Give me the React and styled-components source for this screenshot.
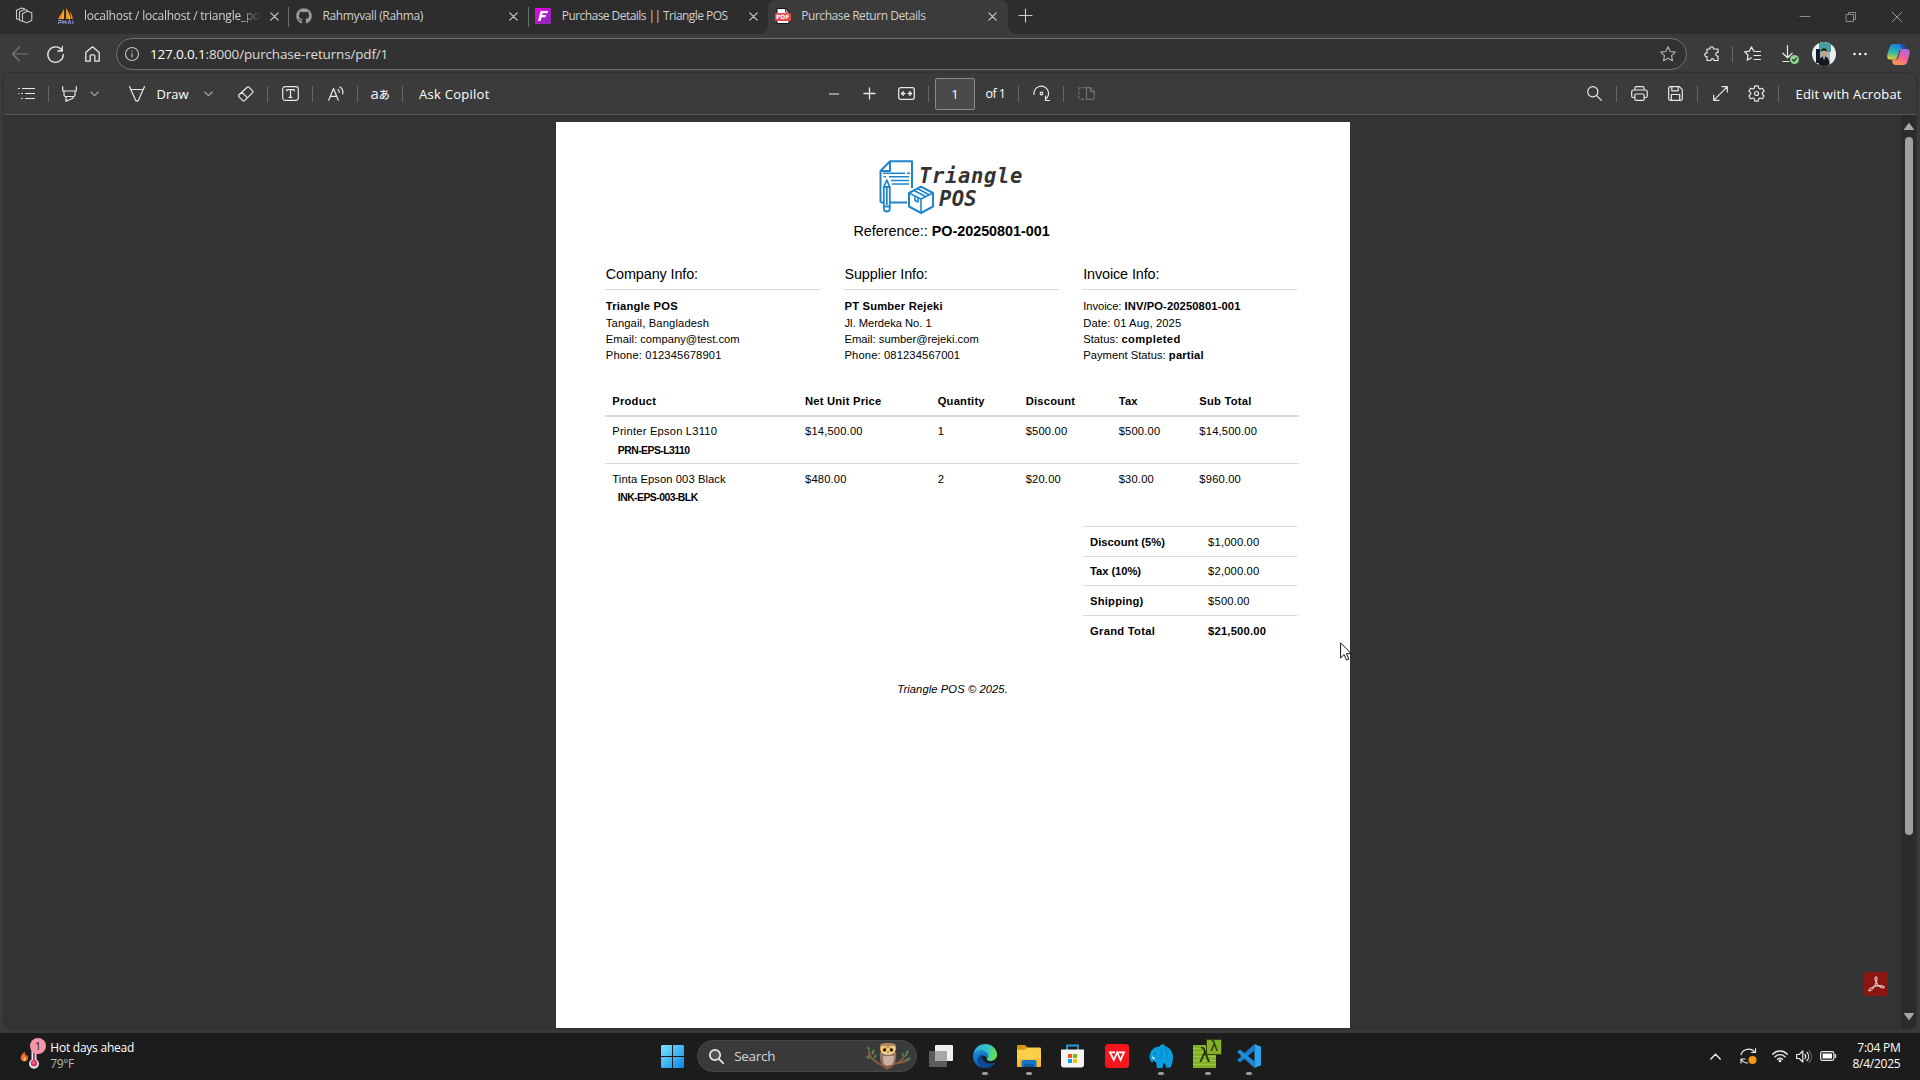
import React from 'react';
import styled, { createGlobalStyle, css } from 'styled-components';
import { FaGithub } from 'react-icons/fa';

const ui = '"Open Sans", "Noto Sans", sans-serif';
const doc = '"Liberation Sans", Arial, sans-serif';

const Global = createGlobalStyle`
  * { box-sizing: border-box; }
  body { margin: 0; background: #3b3b3b; overflow: hidden; }
  svg { display: block; flex: none; overflow: visible; }
`;

const Desktop = styled.div`
  display: flex;
  flex-direction: column;
  width: 1920px;
  height: 1080px;
  background: #3b3b3b;
  font-family: ${ui};
  color: #fff;
`;

/* ---------- shared bits ---------- */

const Icon = styled.svg.attrs((p) => ({
  width: p.$w || 16,
  height: p.$h || 16,
  viewBox: p.$box || `0 0 ${p.$w || 16} ${p.$h || 16}`,
}))`
  fill: none;
  stroke: ${(p) => p.$color || '#e8e8e8'};
  stroke-width: ${(p) => p.$line || 1.1};
  stroke-linecap: round;
  stroke-linejoin: round;
  margin-left: ${(p) => p.$gap || 0}px;
`;

const Divider = styled.span`
  flex: none;
  width: 1px;
  height: ${(p) => p.$h || 16}px;
  margin-left: ${(p) => p.$gap || 0}px;
  background: #666;
`;

const Label = styled.span`
  flex: none;
  width: ${(p) => (p.$w ? `${p.$w}px` : 'auto')};
  margin-left: ${(p) => p.$gap || 0}px;
  font-size: ${(p) => p.$size || 13}px;
  line-height: 18px;
  letter-spacing: ${(p) => p.$ls || 0}px;
  white-space: nowrap;
  color: ${(p) => p.$color || '#fff'};
`;

/* ---------- tab strip ---------- */

const TabStrip = styled.header`
  display: flex;
  flex: none;
  height: 34px;
  background: #2d2d2d;
`;

const Workspaces = styled.div`
  display: flex;
  width: 50px;
  padding: 7px 0 0 15px;
`;

const TabBox = styled.div`
  position: relative;
  display: flex;
  align-items: center;
  flex: none;
  width: 239.4px;
  height: 34px;
  padding: 0 10.500px 2px 6.500px;
  ${(p) => p.$active && css`
    background: #3b3b3b;
    border-radius: 8px 8px 0 0;
    &::before, &::after {
      content: '';
      position: absolute;
      bottom: 0;
      width: 8px;
      height: 8px;
    }
    &::before { left: -8px; background: radial-gradient(circle at 0 0, transparent 7.5px, #3b3b3b 8px); }
    &::after { right: -8px; background: radial-gradient(circle at 100% 0, transparent 7.5px, #3b3b3b 8px); }
  `}
`;

const TabTitle = styled.span`
  width: 178px;
  margin-left: 10.5px;
  overflow: hidden;
  font-size: 12px;
  line-height: 18px;
  letter-spacing: ${(p) => p.$ls}px;
  color: #cfcfcf;
  white-space: nowrap;
  ${(p) => p.$fade && css`mask-image: linear-gradient(90deg, #000 87%, transparent 100%);`}
`;

const TabClose = styled.span`
  display: flex;
  flex: 1;
  justify-content: flex-end;
`;

const TabEdge = styled.span`
  position: absolute;
  right: 0;
  top: 7px;
  width: 1px;
  height: 20px;
  background: #6e6e6e;
`;

const GithubMark = styled(FaGithub)`
  width: 16px;
  height: 16px;
  color: #9a9a9a;
`;

const NewTab = styled.div`
  display: flex;
  padding: 9px 0 0 11px;
`;

const WindowControls = styled.div`
  display: flex;
  align-items: center;
  margin-left: auto;
  padding-right: 18px;
`;

function Tab({ icon, title, ls, active, edge, fade }) {
  return (
    <TabBox $active={active}>
      {icon}
      <TabTitle $ls={ls} $fade={fade}>{title}</TabTitle>
      <TabClose>
        <Icon $w={9} $h={9} $color="#d0d0d0"><path d="M.8 .8l7.4 7.4M8.2 .8L.8 8.2" /></Icon>
      </TabClose>
      {edge && <TabEdge />}
    </TabBox>
  );
}

const PmaIcon = () => (
  <svg width="17" height="17" viewBox="0 0 17 17">
    <path d="M7 1L1 11h5.5zM9 0v11h4.5C13 7 11.500 3 9 0zM13 3c1.500 2.500 2.500 5 2.800 8h-1.600z" fill="#f29111" />
    <path d="M7 1L5 11h1.500zM11 4l1 7h1.500z" fill="#ffc266" />
    <path d="M1 12.500h3v2H1.500V16M6 16v-3l1.500 1.500L9 13v3M11 16l1.500-3.500L14 16M15.800 12.500V16" stroke="#8a8ecb" strokeWidth="1.100" fill="none" />
  </svg>
);

const FlexIcon = () => (
  <svg width="16" height="16" viewBox="0 0 16 16">
    <defs>
      <linearGradient id="fl" x1="0" y1="0" x2="1" y2="1">
        <stop offset="0" stopColor="#f400f4" /><stop offset="1" stopColor="#7b2fa8" />
      </linearGradient>
    </defs>
    <rect width="16" height="16" rx="1" fill="url(#fl)" />
    <path d="M5.500 3H13l-.6 2.300H7.600L7.200 7H11l-.6 2.200H6.600L5.600 13H3z" fill="#fff" />
  </svg>
);

const PdfBadge = styled.span`
  position: relative;
  display: flex;
  align-items: center;
  justify-content: center;
  flex: none;
  width: 16px;
  height: 16px;
`;

const PdfSheet = styled.svg`
  position: absolute;
  inset: 0;
`;

const PdfWord = styled.span`
  position: relative;
  width: 16px;
  height: 8px;
  margin-top: 2px;
  border-radius: 1px;
  background: #e5484d;
  color: #fff;
  font: bold 6px/8px "DejaVu Sans", sans-serif;
  text-align: center;
`;

const PdfIcon = () => (
  <PdfBadge>
    <PdfSheet width="16" height="16" viewBox="0 0 16 16">
      <path d="M2 .5h8.500L14 4v11.500H2z" fill="#fff" stroke="#111" />
      <path d="M10.500 .5V4H14z" fill="#ddd" stroke="#111" strokeWidth=".8" />
    </PdfSheet>
    <PdfWord>PDF</PdfWord>
  </PdfBadge>
);

/* ---------- address bar ---------- */

const NavBar = styled.nav`
  display: flex;
  align-items: center;
  flex: none;
  height: 39px;
  padding-top: 1px;
`;

const AddressBox = styled.div`
  display: flex;
  align-items: center;
  flex: none;
  width: 1571px;
  height: 32px;
  margin-left: 16px;
  padding: 0 10px 0 8px;
  border: 1px solid #707070;
  border-radius: 16px;
  background: #323232;
`;

const Url = styled.span`
  flex: 1;
  margin-left: 11px;
  font-size: 13.5px;
  line-height: 18px;
  letter-spacing: -0.16px;
  color: #dcdcdc;
`;

const Host = styled.span`
  color: #fff;
`;

const Avatar = () => (
  <svg width="24" height="24" viewBox="0 0 24 24">
    <defs><clipPath id="av"><circle cx="12" cy="12" r="12" /></clipPath></defs>
    <g clipPath="url(#av)">
      <rect width="24" height="24" fill="#e9eef0" />
      <rect x="7" width="12" height="10" fill="#4a9d9e" />
      <rect x="8" y="10" width="10" height="14" fill="#9fb5b6" />
      <rect x="4" y="7" width="4" height="14" fill="#111c2c" />
      <path d="M6.500 24c0-7 2-9.500 5.500-9.500s5.500 2.500 5.500 9.500z" fill="#15161c" />
      <ellipse cx="12" cy="10.500" rx="2.800" ry="3.600" fill="#c99f86" />
      <path d="M9 10c-.3-5 6.300-5 6 0-.6-2-5-2-6 0z" fill="#15130f" />
      <path d="M11 14.500h2l-1 4z" fill="#ddd" />
    </g>
  </svg>
);

const Spaced = styled.span`
  display: flex;
  flex: none;
  margin-left: ${(p) => p.$gap || 0}px;
`;

const Copilot = () => (
  <svg width="23" height="21" viewBox="0 0 23 21">
    <defs>
      <linearGradient id="c1" x1=".3" y1="0" x2=".1" y2="1">
        <stop offset="0" stopColor="#1c7fe0" /><stop offset=".5" stopColor="#2fb6a5" /><stop offset="1" stopColor="#f3d22b" />
      </linearGradient>
      <linearGradient id="c2" x1=".8" y1="0" x2=".3" y2="1">
        <stop offset="0" stopColor="#a76be8" /><stop offset=".5" stopColor="#ee5f9a" /><stop offset="1" stopColor="#ff9a4a" />
      </linearGradient>
    </defs>
    <path d="M6.500 0h8c1.800 0 2.500 1 3 2.500L18.200 5h-3c-1.600 0-2.400.8-2.900 2.300L10.500 13c-.6 1.800-1.600 2.600-3 2.600H3.400C.6 15.600-.3 13.500.4 10.500L2.500 3.400C3.200 1.200 4.500 0 6.500 0z" fill="url(#c1)" />
    <path d="M13 0h1.500c1.800 0 2.500 1 3 2.500L18.200 5h-3.700z" fill="#1a4fc4" />
    <path d="M16.500 21h-8c-1.800 0-2.500-1-3-2.500l-.7-2.900h3c1.600 0 2.400-.6 2.900-2.200l1.800-5.800C13 5.800 14 5 15.500 5h4.100c2.800 0 3.700 2.200 3 5.200l-2.100 7.300c-.7 2.300-2 3.500-4 3.500z" fill="url(#c2)" />
    <path d="M10.200 14l2.200-6.800c.3-.9.700-1.500 1.300-1.800l-2.500 8.300c-.4 1.200-1 1.900-2.300 1.900.7-.3 1-.8 1.300-1.600z" fill="#3a3a3a" />
  </svg>
);

/* ---------- viewer ---------- */

const Viewer = styled.main`
  display: flex;
  flex-direction: column;
  flex: none;
  height: 956px;
  margin: 0 4px;
  border-radius: 8px;
  overflow: hidden;
  box-shadow: 0 0 3px rgba(0, 0, 0, 0.35);
`;

const PdfBar = styled.div`
  display: flex;
  align-items: center;
  flex: none;
  height: 42px;
  background: #3b3b3b;
  border-bottom: 1px solid #565656;
`;

const PageInput = styled.span`
  flex: none;
  width: 40px;
  height: 32px;
  margin-left: 6px;
  border: 1px solid #8a8a8a;
  border-radius: 2px;
  background: #4a4a4a;
  font-size: 13px;
  line-height: 31px;
  text-align: center;
`;

const Glyph = styled.span`
  display: flex;
  align-items: baseline;
  flex: none;
  width: ${(p) => p.$w}px;
  margin-left: ${(p) => p.$gap}px;
  font: 15px/16px "Open Sans", sans-serif;
  color: #f0f0f0;
  white-space: nowrap;
`;

const SmallKana = styled.span`
  font: 500 11px/16px "Noto Sans CJK JP", sans-serif;
`;

const Canvas = styled.div`
  position: relative;
  display: flex;
  flex: 1;
  min-height: 0;
  background: #333;
`;

const PageArea = styled.div`
  flex: 1;
  padding: 7px 0 1px 552px;
`;

const ScrollTrack = styled.div`
  display: flex;
  flex-direction: column;
  align-items: center;
  flex: none;
  width: 15px;
  padding: 8px 0 9px;
  background: #2b2b2b;
`;

const ScrollThumb = styled.div`
  width: 8px;
  height: 698px;
  margin: 7px 0 auto;
  border-radius: 4px;
  background: #9f9f9f;
`;

const AcrobatFab = styled.div`
  position: absolute;
  right: 28px;
  bottom: 33px;
  display: flex;
  align-items: center;
  justify-content: center;
  width: 24px;
  height: 24px;
  border-radius: 3px;
  background: #8c1512;
`;

const Pointer = styled.svg`
  position: absolute;
  left: 1336px;
  top: 527px;
`;

/* ---------- invoice sheet ---------- */

const Sheet = styled.article`
  display: flex;
  flex-direction: column;
  width: 794px;
  height: 906px;
  padding: 38px 51px 0 49px;
  background: #fff;
  color: #000;
  font-family: ${doc};
  font-size: 11.2px;
  line-height: 16px;
  letter-spacing: 0.17px;
  white-space: nowrap;
`;

const Brand = styled.div`
  display: flex;
  height: 54px;
  padding-left: 274px;
`;

const BrandName = styled.div`
  display: flex;
  flex-direction: column;
  margin-left: -15px;
  padding-top: 5px;
  font: italic bold 20.5px/23px "DejaVu Sans Mono", monospace;
  letter-spacing: 0.65px;
  color: #333;
`;

const BrandSecond = styled.span`
  padding-left: 20px;
  letter-spacing: 0.3px;
`;

const Reference = styled.div`
  margin: 7px 0 0 248.500px;
  font-size: 14.4px;
  line-height: 20px;
  letter-spacing: -0.02px;
`;

const InfoGrid = styled.section`
  display: grid;
  grid-template-columns: 215px 215px 215px;
  column-gap: 23.7px;
  margin-top: 23px;
`;

const InfoTitle = styled.h4`
  margin: 0 0 8px;
  padding: 0 0 5px 0.8px;
  border-bottom: 1px solid #d9d9d9;
  font-size: 14.4px;
  font-weight: 400;
  line-height: 20px;
  letter-spacing: -0.11px;
`;

const Line = styled.div`
  height: ${(p) => (p.$first ? 17 : 16)}px;
  padding-left: 0.8px;
  letter-spacing: ${(p) => p.$ls ?? 0.13}px;
`;

const Strong = styled.b`
  letter-spacing: ${(p) => p.$ls ?? 0.2}px;
`;

const ItemRow = styled.div`
  display: grid;
  grid-template-columns: 192.7px 132.7px 88px 93px 80.7px 1fr;
  padding: ${(p) => p.$top}px 0 ${(p) => p.$bottom}px 7.3px;
  ${(p) => p.$rule && css`border-bottom: ${p.$rule}px solid #d9d9d9;`}
`;

const HeadRow = styled(ItemRow)`
  margin-top: 24px;
  font-weight: 700;
  letter-spacing: 0.22px;
`;

const Name = styled.div`
  letter-spacing: ${(p) => p.$ls}px;
`;

const Sku = styled.div`
  margin-top: ${(p) => p.$top}px;
  margin-bottom: -1px;
  padding-left: 5.500px;
  font-size: 10.4px;
  font-weight: 700;
  letter-spacing: -0.53px;
`;

const Totals = styled.section`
  width: 214px;
  margin: 21px 0 0 478px;
`;

const TotalRow = styled.div`
  display: grid;
  grid-template-columns: 118px 1fr;
  height: ${(p) => p.$h}px;
  padding: ${(p) => p.$h - 23}px 0 0 7.100px;
  border-top: 1px solid #d9d9d9;
`;

const Footer = styled.footer`
  margin: 36px 0 0 292.300px;
  font-style: italic;
  letter-spacing: 0.09px;
`;

const BrandIcon = () => (
  <svg width="55" height="55" viewBox="0 0 55 55" fill="none" stroke="#1f86cc" strokeWidth="2" strokeLinejoin="round">
    <path d="M1.500 42.500V11L11 1.200h22V28M11 1.200V11H1.500M1.500 42.500H5M11 42.500h17" />
    <path d="M4 13.200h22M4.500 16.800H7M10 16.800h20M12 20.500h18M13 24h17" strokeWidth="1.400" />
    <path d="M28 13.200h3" strokeWidth="1.400" />
    <path d="M4.800 27v21.500a3 3 0 0 0 6 0V27L7.800 20zM4.800 27h6M4.800 46.500h6M7.800 28v17" fill="#fff" strokeWidth="1.800" />
    <path d="M30 33l12-6.300L54 33v13.500L42 53l-12-6.500z" fill="#fff" />
    <path d="M30 33l12 6 12-6M42 39v14M35 30.500L46.500 36.500M38.500 28.500L50.500 35M36 36v4.500l3 1.500v-4.500" strokeWidth="1.600" />
  </svg>
);

/* ---------- taskbar ---------- */

const Taskbar = styled.footer`
  position: relative;
  display: flex;
  align-items: center;
  flex: none;
  height: 47px;
  margin-top: 4px;
  padding-bottom: 1px;
  background: #1c1c1c;
`;

const Weather = styled.div`
  display: flex;
  align-items: center;
  width: 661px;
  padding-left: 20px;
`;

const TwoLines = styled.div`
  display: flex;
  flex-direction: column;
  align-items: ${(p) => p.$align || 'flex-start'};
  margin-left: ${(p) => p.$gap || 0}px;
  font-size: 12px;
  line-height: 16px;
  letter-spacing: -0.24px;
`;

const Muted = styled.span`
  color: #b9b9b9;
  letter-spacing: -0.4px;
`;

const Badge = styled.span`
  position: absolute;
  left: 30px;
  top: 5px;
  width: 16px;
  height: 16px;
  border-radius: 50%;
  background: #f797a3;
  color: #222;
  font-size: 11px;
  line-height: 16px;
  text-align: center;
`;

const SearchPill = styled.div`
  display: flex;
  align-items: center;
  flex: none;
  width: 220px;
  height: 32px;
  margin-left: 13px;
  padding: 0 5px 0 11px;
  border: 1px solid #474747;
  border-radius: 16px;
  background: #3a3a3a;
`;

const SearchText = styled.span`
  flex: 1;
  margin-left: 10.2px;
  font-size: 13.5px;
  line-height: 18px;
  letter-spacing: -0.3px;
  color: #d6d6d6;
`;

const TaskApp = styled.div`
  position: relative;
  flex: none;
  margin-left: ${(p) => p.$gap}px;
  ${(p) => p.$open && css`
    &::after {
      content: '';
      position: absolute;
      left: calc(50% - 3px);
      top: calc(50% + 15.500px);
      width: 6px;
      height: 3px;
      border-radius: 2px;
      background: #9a9a9a;
    }
  `}
`;

const Lambda = styled.div`
  display: flex;
  align-items: center;
  justify-content: center;
  width: ${(p) => p.$s}px;
  height: ${(p) => p.$s}px;
  background: ${(p) => (p.$lined ? 'repeating-linear-gradient(#84b026 0 3px, #a0c94a 3px 4px)' : '#84b026')};
  color: #222c10;
  font: ${(p) => p.$s * 0.85}px/1 "DejaVu Sans", sans-serif;
`;

const LambdaStack = styled.div`
  width: 29px;
  height: 23px;
`;

const LambdaTop = styled(Lambda)`
  position: absolute;
  right: 0;
  top: -6px;
  border: 1px solid #35420f;
`;

const Tray = styled.div`
  display: flex;
  align-items: center;
  margin-left: auto;
  padding-right: 19.500px;
`;

const Thermo = () => (
  <svg width="20" height="24" viewBox="0 0 20 24">
    <path d="M4.500 8c-2.500 2-4 4-3.800 6 .1 2 1.600 3.500 3.600 3.500S8 16 8 14c0-1.500-.8-2.500-1.500-3.200-.3.800-.8 1-1.200 1C5.500 10.500 5.300 9 4.500 8z" fill="#ee6c35" />
    <path d="M4.500 13c-1.300 1-1.500 3.500 0 4 1.500-.5 1.500-2.500 0-4z" fill="#ffc45c" />
    <path d="M11.500 1v14.500a5 5 0 1 0 5 0V1z" fill="#dfe5fa" />
    <circle cx="14" cy="19.300" r="3.200" fill="#d33b5c" /><rect x="13" y="4" width="2" height="14" fill="#d33b5c" />
    <circle cx="13.500" cy="18.800" r="1" fill="#ff9fb5" />
  </svg>
);

const WinLogo = () => (
  <svg width="23" height="23" viewBox="0 0 23 23">
    <defs><linearGradient id="w" x1="0" y1="0" x2="1" y2="1"><stop offset="0" stopColor="#7fe6fd" /><stop offset="1" stopColor="#0a86e8" /></linearGradient></defs>
    <path d="M1 0h10v11H0V1zM12 0h10l1 1v10H12zM0 12h11v11H1l-1-1zM12 12h11v10l-1 1H12z" fill="url(#w)" />
  </svg>
);

const Owl = () => (
  <svg width="45" height="27" viewBox="0 0 45 27">
    <path d="M3 9c1 6 5 10 13 13 10 2 18-2 24-10M31 20c4 0 8-1 11-4M16 22l4 3M5 14L2 13" stroke="#8a5a3f" strokeWidth="2" fill="none" strokeLinecap="round" />
    <path d="M2 3c2 1 2 4 1 5-1-1-2-3-1-5zM8 6c1 2 0 5-2 6-1-2 0-5 2-6zM10 11c1 2 0 4-2 5 0-2 0-4 2-5zM0 13c2 0 3 1 4 3-2 0-4-1-4-3zM42 7c1 2 0 4-2 6-1-2 0-5 2-6zM37 9c1 2 1 4 0 5-1-1-1-4 0-5zM45 15c-1 2-3 3-5 3 0-2 3-4 5-3z" fill="#4f8f57" />
    <path d="M14 9c-1 9 2 15 8 15s9-6 8-15z" fill="#9a7463" />
    <path d="M17 13c0 6 1 10 5 10s6-4 6-10z" fill="#cbb0a0" />
    <path d="M14.500 1.500C17-.5 27-.5 29.500 1.500c1.500 4 .8 10-7.500 10.500-8.300-.5-9-6.500-7.500-10.500z" fill="#b58a5c" />
    <path d="M15 4c3-2 6-1 7 2 1-3 4-4 7-2 1 4-1 7.500-7 7.500S14 8 15 4z" fill="#f3dfae" />
    <circle cx="18.600" cy="6.800" r="2.700" fill="#f2b32c" /><circle cx="25.400" cy="6.800" r="2.700" fill="#f2b32c" />
    <circle cx="18.600" cy="6.800" r="1.600" fill="#1b1410" /><circle cx="25.400" cy="6.800" r="1.600" fill="#1b1410" />
    <path d="M21 8.500h2l-1 2.500z" fill="#6a4526" />
    <path d="M17 22l3 1 5-1 2 2-7 3z" fill="#8a5a3f" />
  </svg>
);

const TaskView = () => (
  <svg width="24" height="22" viewBox="0 0 24 22">
    <rect y="6" width="18" height="16" rx="1" fill="#5c5c5c" />
    <rect x="6" width="18" height="16" rx="1" fill="#efefef" />
    <path d="M6 6h12v10H7l-1-1z" fill="#a8a8a8" />
  </svg>
);

const Edge = () => (
  <svg width="24" height="24" viewBox="0 0 24 24">
    <defs>
      <linearGradient id="e1" x1="0" y1=".3" x2="1" y2=".5"><stop offset="0" stopColor="#2aa9e6" /><stop offset=".6" stopColor="#36c6c0" /><stop offset="1" stopColor="#6be04a" /></linearGradient>
      <linearGradient id="e2" x1="0" y1="0" x2=".4" y2="1"><stop offset="0" stopColor="#1b8fe0" /><stop offset="1" stopColor="#0c59a8" /></linearGradient>
    </defs>
    <path d="M.2 11C1 4.500 5.800 0 12 0c7 0 12 5 12 10.500 0 4-3 6.500-6.500 6.500-3 0-4-1.300-3.700-2.200.7-1 1-1.800 1-3 0-3-3-5-6.500-5C4.500 6.800 1.500 8.500.2 11z" fill="url(#e1)" />
    <path d="M.1 11.500C1 8.800 4 6.500 8 6.500c3.500 0 6.800 2 6.800 5.200 0 1-.3 2-.8 2.800-.6-1.600-1.900-3-4-3-3.500 0-3.500 9 4.500 10 3 .4 5.500-1 7.300-2.700C19.600 22 16 24 12 24 5 24-.5 18.500.1 11.500z" fill="url(#e2)" />
    <path d="M9 10.200c-3 1.200-5 4-4.600 7 .4 3.500 3.600 6.500 7.600 6.800 4 0 7.200-1.600 9.400-4.600.4-.6 0-1-.6-.7-1.400.7-3 1-4.800.9C11.500 19 8.500 16 9 10.200z" fill="#0a4a94" />
  </svg>
);

const Explorer = () => (
  <svg width="24" height="22" viewBox="0 0 24 22">
    <path d="M0 1.500C0 .7.500 0 1.500 0H8l2.500 2.500L9 5H0z" fill="#d9960f" />
    <path d="M0 4.800h7.500L10 2.500h12.500c.9 0 1.500.6 1.500 1.500v16.500c0 .9-.6 1.500-1.500 1.500h-21C.6 22 0 21.400 0 20.500z" fill="#fbcf49" />
    <path d="M0 14h24v6.500c0 .9-.6 1.500-1.500 1.500h-21C.6 22 0 21.400 0 20.500z" fill="#f5bb35" />
    <path d="M4.500 22v-5c0-1.200.8-2 2-2h11c1.200 0 2 .8 2 2v5z" fill="#1873c4" />
    <path d="M7 19h10v3H7z" fill="#0f5aa3" />
  </svg>
);

const Store = () => (
  <svg width="23" height="24" viewBox="0 0 23 24">
    <path d="M6 6V1.500h11V6" fill="none" stroke="#2c95dc" strokeWidth="1.800" />
    <path d="M0 5.500h23V21c0 1.600-1 2.500-2.500 2.500h-18C1 23.500 0 22.600 0 21z" fill="#f3f3f3" />
    <path d="M7 10h4v4H7z" fill="#f25022" /><path d="M12 10h4v4h-4z" fill="#7fba00" />
    <path d="M7 15h4v4H7z" fill="#00a4ef" /><path d="M12 15h4v4h-4z" fill="#ffb900" />
  </svg>
);

const Wps = () => (
  <svg width="24" height="24" viewBox="0 0 24 24">
    <rect width="24" height="24" rx="3.500" fill="#f9141e" />
    <path d="M3.800 8.300H10M5 8.500l3.800 7.500 3.400-7.500 3.300 7.500L19 8.300h-5.500" fill="none" stroke="#fff" strokeWidth="1.800" />
  </svg>
);

const Elephant = () => (
  <svg width="24" height="24" viewBox="0 0 24 24">
    <path d="M1 10C2.500 5 6 2.800 10.500 2.500 12 .8 13.500 0 15 .5l.8 1.500C21 3.500 24 8 24 13c0 4-1 7.500-2.500 10.500H17l-.8-4h-2L13.500 24H8l-1-6c-1.500 0-2.500-.8-3-2l-.5 3C.5 16.500 0 13 1 10z" fill="#0c9fe0" />
    <path d="M11 4c3 3 2 9-2 11M14.500 3c4 3 4 8 3 12" stroke="#0b7fc0" strokeWidth="1" fill="none" />
    <path d="M3 12l3.300 3-2.500.3z" fill="#fff" /><circle cx="6" cy="9.500" r=".7" fill="#063c66" />
  </svg>
);

const VsCode = () => (
  <svg width="24" height="24" viewBox="0 0 24 24">
    <path d="M17.500 0L24 2.800v18.400L17.500 24z" fill="#2ea3f0" />
    <path d="M17.500 0v6.500L3 18.500 0 16z" fill="#1680cf" />
    <path d="M17.500 24v-6.500L3 5.500 0 8z" fill="#1c8ddb" />
  </svg>
);

/* ---------- data ---------- */

const items = [
  { name: 'Printer Epson L3110', ls: 0.19, sku: 'PRN-EPS-L3110', price: '$14,500.00', qty: '1', discount: '$500.00', tax: '$500.00', sub: '$14,500.00', top: 6, bottom: 5, skuTop: 4, rule: 1 },
  { name: 'Tinta Epson 003 Black', ls: 0.09, sku: 'INK-EPS-003-BLK', price: '$480.00', qty: '2', discount: '$20.00', tax: '$30.00', sub: '$960.00', top: 7, bottom: 0, skuTop: 3 },
];

const Invoice = () => (
  <Sheet>
    <Brand>
      <BrandIcon />
      <BrandName><span>Triangle</span><BrandSecond>POS</BrandSecond></BrandName>
    </Brand>
    <Reference>Reference:: <b>PO-20250801-001</b></Reference>
    <InfoGrid>
      <div>
        <InfoTitle>Company Info:</InfoTitle>
        <Line $first><Strong>Triangle POS</Strong></Line>
        <Line $ls={0.14}>Tangail, Bangladesh</Line>
        <Line $ls={0.03}>Email: company@test.com</Line>
        <Line>Phone: 012345678901</Line>
      </div>
      <div>
        <InfoTitle>Supplier Info:</InfoTitle>
        <Line $first><Strong>PT Sumber Rejeki</Strong></Line>
        <Line $ls={-0.03}>Jl. Merdeka No. 1</Line>
        <Line $ls={0.02}>Email: sumber@rejeki.com</Line>
        <Line>Phone: 081234567001</Line>
      </div>
      <div>
        <InfoTitle>Invoice Info:</InfoTitle>
        <Line $first $ls={-0.04}>Invoice: <Strong $ls={0.115}>INV/PO-20250801-001</Strong></Line>
        <Line>Date: 01 Aug, 2025</Line>
        <Line $ls={0.04}>Status: <Strong $ls={0.36}>completed</Strong></Line>
        <Line $ls={0.03}>Payment Status: <Strong>partial</Strong></Line>
      </div>
    </InfoGrid>
    <HeadRow $top={6} $bottom={6} $rule={2}>
      <span>Product</span><span>Net Unit Price</span><span>Quantity</span>
      <span>Discount</span><span>Tax</span><span>Sub Total</span>
    </HeadRow>
    {items.map((r) => (
      <ItemRow key={r.sku} $top={r.top} $bottom={r.bottom} $rule={r.rule}>
        <Name $ls={r.ls}>{r.name}<Sku $top={r.skuTop}>{r.sku}</Sku></Name>
        <span>{r.price}</span><span>{r.qty}</span><span>{r.discount}</span><span>{r.tax}</span><span>{r.sub}</span>
      </ItemRow>
    ))}
    <Totals>
      <TotalRow $h={30}><Strong $ls={0.03}>Discount (5%)</Strong><span>$1,000.00</span></TotalRow>
      <TotalRow $h={29}><Strong $ls={-0.06}>Tax (10%)</Strong><span>$2,000.00</span></TotalRow>
      <TotalRow $h={30}><Strong>Shipping)</Strong><span>$500.00</span></TotalRow>
      <TotalRow $h={30}><Strong $ls={0.27}>Grand Total</Strong><Strong>$21,500.00</Strong></TotalRow>
    </Totals>
    <Footer>Triangle POS © 2025.</Footer>
  </Sheet>
);

export default function App() {
  return (
    <Desktop>
      <Global />
      <TabStrip>
        <Workspaces>
          <Icon $w={18} $h={18} $color="#c8c8c8">
            <path d="M7.500 6.500l4.800-2.300 4.500 1.600v7.400L12 15.800l-4.500-1.600zM4.500 13V4.800L9.500 2.500l3 .9M1.500 11.500V3.300L6.500 1l3 .9M1.500 11.500l1.800 1.200M4.500 13l1.800 1.200" />
          </Icon>
        </Workspaces>
        <Tab icon={<PmaIcon />} title="localhost / localhost / triangle_po" ls={-0.23} edge fade />
        <Tab icon={<GithubMark />} title="Rahmyvall (Rahma)" ls={-0.36} edge />
        <Tab icon={<FlexIcon />} title="Purchase Details || Triangle POS" ls={-0.557} />
        <Tab icon={<PdfIcon />} title="Purchase Return Details" ls={-0.43} active />
        <NewTab><Icon $w={13} $h={13} $color="#d0d0d0"><path d="M6.500 0v13M0 6.500h13" /></Icon></NewTab>
        <WindowControls>
          <Icon $w={10} $h={10} $color="#8c8c8c" $line={1}><path d="M0 4.500h10" /></Icon>
          <Icon $w={10} $h={10} $gap={36} $color="#8c8c8c" $line={1}><path d="M.5 2.500h7v7h-7zM2.500 2.500v-2h7v7h-2" /></Icon>
          <Icon $w={10} $h={10} $gap={36} $color="#9a9a9a" $line={1}><path d="M0 0l10 10M10 0L0 10" /></Icon>
        </WindowControls>
      </TabStrip>

      <NavBar>
        <Icon $gap={12} $color="#7a7a7a"><path d="M.5 8h15M7.500 1L.5 8l7 7" /></Icon>
        <Icon $w={17} $h={17} $gap={19} $line={1.3}><path d="M15 4.500A7.700 7.700 0 1 0 16.200 8.500M15.300 .5v4.500h-4.500" /></Icon>
        <Icon $w={15} $h={16} $gap={21} $line={1.3}><path d="M.8 6.500L7.500 .8l6.700 5.700v8.700H9.800V9.800a1 1 0 0 0-1-1H6.200a1 1 0 0 0-1 1v5.400H.8z" /></Icon>
        <AddressBox>
          <Icon $w={14} $h={14} $color="#c4c4c4"><circle cx="7" cy="7" r="6.500" /><path d="M7 6.500V10M7 4v.3" /></Icon>
          <Url><Host>127.0.0.1</Host>:8000/purchase-returns/pdf/1</Url>
          <Icon $color="#b0b0b0"><path d="M8 .8l2.200 4.700 5.100.6-3.800 3.500 1 5.100L8 12.200l-4.500 2.500 1-5.100L.7 6.100l5.100-.6z" /></Icon>
        </AddressBox>
        <Icon $gap={16.5} $line={1.2}><path d="M3 3h3c-.6-3 4-3 3.500 0H14v3.500c-3-.5-3 4 0 3.500V14.500h-4c.4-2.500-3.500-2.500-3 0H3v-4c-3 .5-3-4 0-3.500z" /></Icon>
        <Divider $gap={12} />
        <Icon $w={17} $gap={11.5} $line={1.2}><path d="M10.500 5.200L9.600 5.100 7.500 .8 5.400 5.200l-4.800.6 3.500 3.400-.9 4.900 4.300-2.300M11.500 5.500h5M10 9.500h6.500M10 13.500h6.500" /></Icon>
        <Icon $w={18} $h={18} $gap={21} $line={1.2}>
          <path d="M5.500 .5v12M.8 8.200l4.700 4.600 4.700-4.600M1 16.500h6" />
          <circle cx="12.500" cy="14.500" r="4.500" fill="#8fd08f" stroke="none" />
          <path d="M10.500 14.600l1.400 1.400 2.600-2.800" stroke="#22331f" />
        </Icon>
        <Spaced $gap={12}><Avatar /></Spaced>
        <Icon $w={14} $h={4} $gap={17}><g fill="#f0f0f0" stroke="none"><circle cx="1.500" cy="2" r="1.300" /><circle cx="7" cy="2" r="1.300" /><circle cx="12.500" cy="2" r="1.300" /></g></Icon>
        <Spaced $gap={19.5}><Copilot /></Spaced>
      </NavBar>

      <Viewer>
        <PdfBar>
          <Icon $w={17} $h={13} $gap={14} $line={1.2}><path d="M4.500 1.500H16.500M7.500 6.500h9M7.500 11.500h9M.6 1.500h.8M3.500 6.500h.8M3.500 11.500h.8M.6 6.500h.2" /></Icon>
          <Divider $gap={13} />
          <Icon $w={15} $h={16} $gap={12.5} $line={1.2}><path d="M.7 .5v4.500h13.600V.5M2 5v4c0 1 .5 1.500 1.500 1.500h8c1 0 1.500-.5 1.500-1.500V5M4 10.500v4.800l7-3V10.500" /></Icon>
          <Icon $w={9} $h={6} $gap={13.5} $color="#a8a8a8"><path d="M.8 1l3.700 3.700L8.200 1" /></Icon>
          <Icon $w={16} $h={16} $gap={30} $line={1.2}><path d="M.5 .5l1.300 3h12.400l1.300-3M1.800 3.500L6.500 14c.6 1.600 2.400 1.600 3 0l4.700-10.500" /></Icon>
          <Label $gap={11.5} $w={32}>Draw</Label>
          <Icon $w={9} $h={6} $gap={15.5} $color="#a8a8a8"><path d="M.8 1l3.700 3.700L8.200 1" /></Icon>
          <Icon $w={17} $h={16} $gap={23.5} $line={1.2}><path d="M10.200 1.200a1.200 1.200 0 0 1 1.700 0l3.700 3.700a1.200 1.200 0 0 1 0 1.700l-8.100 8.100a1.200 1.200 0 0 1-1.700 0l-4-4a1.200 1.200 0 0 1 0-1.700zM4.800 6.200l5.600 5.600" /></Icon>
          <Divider $gap={13} />
          <Icon $w={17} $h={15} $gap={14} $line={1.2}><rect x=".7" y=".7" width="15.600" height="13.600" rx="2.500" /><path d="M4.800 5V3.700h7.400V5M8.500 3.700v7.600M7 11.300h3" /></Icon>
          <Divider $gap={13} />
          <Icon $w={16} $h={15} $gap={15} $line={1.2}><path d="M.7 14.300L5.500 2.500l4.800 11.800M2.300 10.300h6.400M10 3.500c1 .8 1.400 2 1.200 3M12 1c2.300 1.600 3.300 4.300 2.700 7" /></Icon>
          <Divider $gap={13.5} />
          <Glyph $w={19} $gap={12.5}>a<SmallKana>あ</SmallKana></Glyph>
          <Divider $gap={12.5} />
          <Label $gap={16} $w={71} $ls={0.27}>Ask Copilot</Label>
          <Icon $w={10} $h={2} $gap={339} $color="#b5b5b5" $line={1.6}><path d="M.5 1h9" /></Icon>
          <Icon $w={11} $h={11} $gap={25} $line={1.3}><path d="M5.500 0v11M0 5.500h11" /></Icon>
          <Icon $w={17} $h={13} $gap={23} $line={1.3}><rect x=".7" y=".7" width="15.600" height="11.600" rx="2" /><path d="M7 6.500H3.800M5.300 4.700L3.500 6.500l1.800 1.800M10 6.500h3.200M11.700 4.700l1.800 1.800-1.800 1.800" /></Icon>
          <Divider $gap={13} />
          <PageInput>1</PageInput>
          <Label $gap={10.5} $w={19.5} $size={12.5} $ls={-0.6}>of 1</Label>
          <Divider $gap={12.5} />
          <Icon $w={17} $h={17} $gap={14} $line={1.2}><path d="M1 9.500A7.300 7.300 0 1 1 12.300 14.500M12.500 11v4.500h4" /><circle cx="8.500" cy="8.500" r="1.300" /></Icon>
          <Divider $gap={13} />
          <Icon $w={17} $h={13} $gap={14} $color="#6f6f6f" $line={1.2}><path d="M8.500 .7h4l3.800 3.800v6.300a1.500 1.500 0 0 1-1.500 1.500H8.500zM12.300 .7v4h4" /><path d="M7.500 .7H2.500A1.500 1.500 0 0 0 .8 2.200v8.600c0 .9.600 1.500 1.500 1.500h5.200" strokeDasharray="2.500 2.200" /></Icon>
          <Icon $w={15} $h={15} $gap={492.5} $line={1.2}><circle cx="5.800" cy="5.800" r="5.100" /><path d="M9.600 9.600l4.800 4.800" /></Icon>
          <Divider $gap={14} />
          <Icon $w={17} $h={15} $gap={14} $line={1.2}><path d="M4 4V2a1.300 1.300 0 0 1 1.300-1.300h6.400A1.300 1.300 0 0 1 13 2v2M3.500 11.500H2.200C1.300 11.500.7 11 .7 10V6C.7 4.700 1.500 4 2.700 4h11.600c1.200 0 2 .7 2 2v4c0 1-.6 1.500-1.500 1.500h-1.300" /><rect x="3.800" y="8" width="9.400" height="6.300" rx="1.300" /></Icon>
          <Icon $w={15} $h={15} $gap={19.5} $line={1.2}><path d="M2.200 .7h9.100l3 3v9.100a1.500 1.500 0 0 1-1.500 1.500H2.200a1.500 1.500 0 0 1-1.500-1.500V2.200A1.500 1.500 0 0 1 2.200 .7zM3.800 1v3.800h6.400V1M3.300 14V8.500h8.400V14" /></Icon>
          <Divider $gap={14.5} />
          <Icon $w={15} $h={15} $gap={15} $line={1.2}><path d="M.7 14.300L14.300 .7M9 .7h5.300V6M.7 9v5.300H6" /></Icon>
          <Icon $w={17} $h={17} $gap={20} $line={1.2}><path d="M6.800 .8h3.400l.5 2.400 1.400.8 2.300-.8 1.700 2.900L14.400 7.700v1.600l1.700 1.600-1.700 2.900-2.300-.8-1.400.8-.5 2.400H6.800l-.5-2.400-1.400-.8-2.300.8L.9 10.900l1.700-1.600V7.700L.9 6.100l1.700-2.900 2.300.8 1.400-.8z" /><circle cx="8.500" cy="8.500" r="2" /></Icon>
          <Divider $gap={13} />
          <Label $gap={16.5} $ls={0.17}>Edit with Acrobat</Label>
        </PdfBar>
        <Canvas>
          <PageArea><Invoice /></PageArea>
          <ScrollTrack>
            <Icon $w={10} $h={7}><path d="M5 .5L9.500 6.500h-9z" fill="#a8a8a8" stroke="#a8a8a8" /></Icon>
            <ScrollThumb />
            <Icon $w={10} $h={7}><path d="M5 6.500L.5 .5h9z" fill="#a8a8a8" stroke="#a8a8a8" /></Icon>
          </ScrollTrack>
          <AcrobatFab>
            <Icon $w={17} $h={16} $color="#e0c4c3" $line={1.2}><path d="M8 6C6.500 3.500 6.800 .8 8 .8s1.500 2.500 0 6.200C6.500 11 3.500 15 1.500 15 0 14.600 1 12.500 5 11c4-1.300 9-1.700 10.800-.5 1 1.200-.8 1.800-2.800 1C11 10.500 9 8.500 8 6z" /></Icon>
          </AcrobatFab>
          <Pointer width="12" height="19" viewBox="0 0 12 19">
            <path d="M.6 .8v15.200l3.500-3.400 2.400 5.400 2.300-1-2.400-5.300h4.900z" fill="#fff" stroke="#111" strokeWidth="1" />
          </Pointer>
        </Canvas>
      </Viewer>

      <Taskbar>
        <Weather>
          <Thermo />
          <Badge>1</Badge>
          <TwoLines $gap={10.3}><span>Hot days ahead</span><Muted>79°F</Muted></TwoLines>
        </Weather>
        <WinLogo />
        <SearchPill>
          <Icon $w={15} $h={15} $line={1.7}><circle cx="6" cy="6" r="5.200" fill="#555" /><path d="M9.900 9.900l4.300 4.300" /></Icon>
          <SearchText>Search</SearchText>
          <Owl />
        </SearchPill>
        <TaskApp $gap={12}><TaskView /></TaskApp>
        <TaskApp $gap={20} $open><Edge /></TaskApp>
        <TaskApp $gap={20} $open><Explorer /></TaskApp>
        <TaskApp $gap={20}><Store /></TaskApp>
        <TaskApp $gap={21}><Wps /></TaskApp>
        <TaskApp $gap={20} $open><Elephant /></TaskApp>
        <TaskApp $gap={20} $open>
          <LambdaStack><Lambda $s={23} $lined>λ</Lambda></LambdaStack>
          <LambdaTop $s={16}>λ</LambdaTop>
        </TaskApp>
        <TaskApp $gap={15} $open><VsCode /></TaskApp>
        <Tray>
          <Icon $w={11} $h={7} $line={1.5}><path d="M.8 6l4.700-4.700L10.200 6" /></Icon>
          <Icon $w={17} $h={16} $gap={19} $line={1.2}><path d="M1 6.500C3 .5 11 -.5 14.500 4M15.500 .5V4.500h-4M1 15v-4h4M1.500 11.500c1.500 2.500 3.500 3.500 6 3.500" /><circle cx="12.500" cy="12" r="4" fill="#f8960c" stroke="none" /></Icon>
          <Icon $w={16} $h={12} $gap={15} $line={1.4}><path d="M.7 4.200c4-4.300 10.600-4.300 14.600 0M3 6.800c2.900-2.900 7.100-2.900 10 0M5.500 9.300c1.500-1.500 3.500-1.500 5 0" /><circle cx="8" cy="10.800" r=".8" fill="#fff" /></Icon>
          <Icon $w={16} $h={13} $gap={8} $line={1.2}><path d="M.6 4.500h2.600L6.800 1v11L3.200 8.500H.6zM9 4.500c1 1.200 1 2.800 0 4M11 2.500c2.200 2.300 2.200 5.700 0 8" /><path d="M13 .8c3.300 3.500 3.300 8 0 11.500" stroke="#666" /></Icon>
          <Icon $w={16} $h={10} $gap={8} $line={1.2}><rect x=".6" y=".6" width="13.300" height="8.800" rx="1.800" /><rect x="2.500" y="2.500" width="9.500" height="5" fill="#fff" stroke="none" /><path d="M15.500 3.500v3" /></Icon>
          <TwoLines $align="flex-end" $gap={16}><span>7:04 PM</span><span>8/4/2025</span></TwoLines>
        </Tray>
      </Taskbar>
    </Desktop>
  );
}
